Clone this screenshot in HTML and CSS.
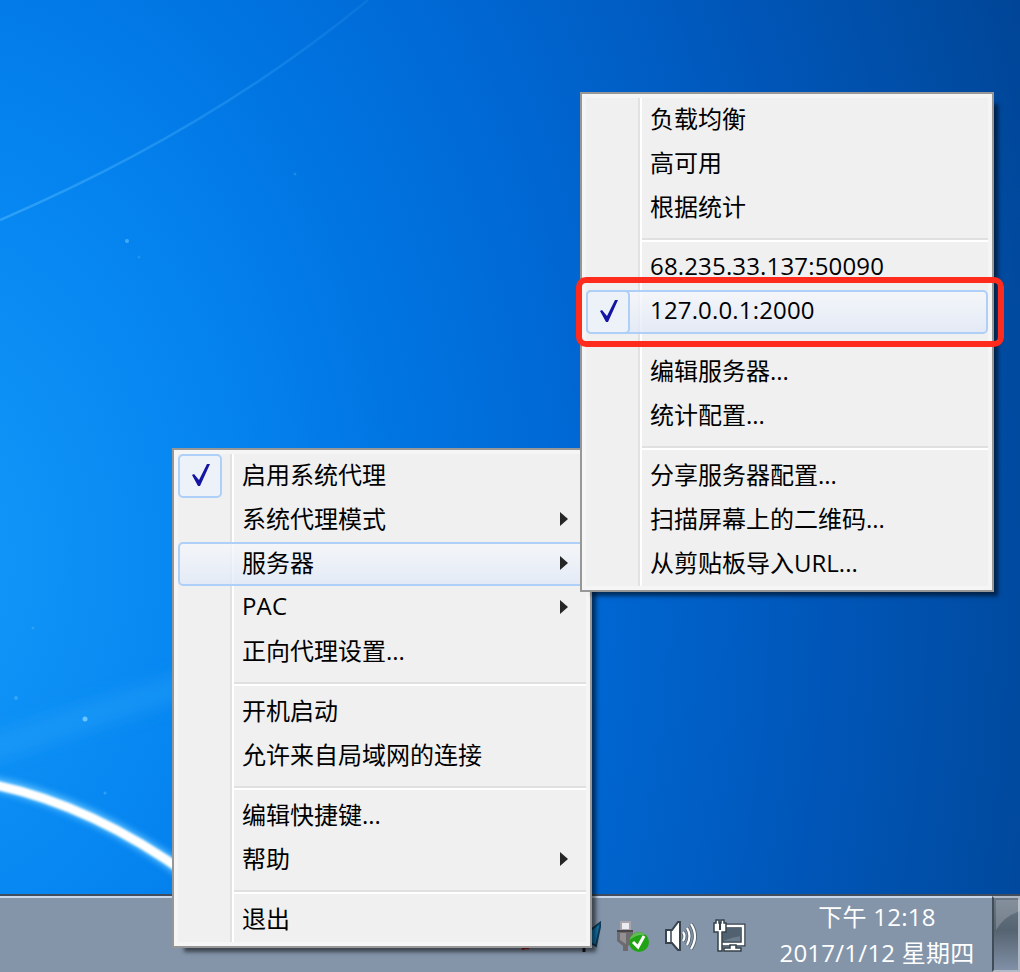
FILE: index.html
```html
<!DOCTYPE html>
<html lang="zh-CN">
<head>
<meta charset="utf-8">
<title>桌面</title>
<link rel="stylesheet" href="styles.css">
</head>
<body>
<main class="desktop">
  <svg class="wallpaper" width="1020" height="896" viewBox="0 0 1020 896" aria-hidden="true">
    <defs>
      <linearGradient id="ray" x1="0" y1="0" x2="1" y2="0"><stop offset="0" stop-color="#5bc0ff" stop-opacity=".45"/><stop offset="1" stop-color="#5bc0ff" stop-opacity=".1"/></linearGradient>
      <filter id="soft" x="-20%" y="-40%" width="140%" height="180%"><feGaussianBlur stdDeviation="3"/></filter>
      <filter id="wide" x="-20%" y="-60%" width="140%" height="220%"><feGaussianBlur stdDeviation="9"/></filter>
      <filter id="edge"><feGaussianBlur stdDeviation="1"/></filter>
    </defs>
    <path d="M0 220Q210 130 368 0" fill="none" stroke="url(#ray)" stroke-width="2.5"/>
    <path d="M-30 757Q80 718 220 674" fill="none" stroke="#35a9fb" stroke-opacity=".38" stroke-width="22" filter="url(#wide)"/>
    <path d="M-20 781Q85 799 190 876" fill="none" stroke="#58bdff" stroke-width="14" filter="url(#soft)"/>
    <path d="M-20 782Q85 800 190 876" fill="none" stroke="#fff" stroke-width="9" filter="url(#edge)"/>
    <g fill="#6bc4ff"><circle cx="85" cy="719" r="2.5"/><circle cx="127" cy="241" r="2" opacity=".6"/><circle cx="16" cy="698" r="2" opacity=".4"/><circle cx="105" cy="793" r="1.5" opacity=".4"/><circle cx="33" cy="628" r="1.5" opacity=".3"/><circle cx="295" cy="174" r="1.5" opacity=".25"/><circle cx="139" cy="257" r="1.5" opacity=".25"/></g>
  </svg>

  <footer class="taskbar">
    <div class="tray">
      <svg class="hidden-apps" width="80" height="36" viewBox="0 0 80 36"><path d="M80 4L62 18L70 25L75 28Z" fill="#137bb8" stroke="#123b55" stroke-width="2"/><path d="M2 32V30H8" fill="none" stroke="#a51e25" stroke-width="2.500"/><path d="M63 28V34" stroke="#17191d" stroke-width="3"/></svg>
      <svg width="32" height="36" viewBox="0 0 32 36"><path d="M4 4H13V12H4Z" fill="#ececf2" stroke="#aaa5aa" stroke-width="2"/><path d="M0 12H16V24L11 28V33H6V28L0 23Z" fill="#6d6b6e"/><path d="M0 13H16" stroke="#484649" stroke-width="2"/><path d="M3 15H9V26L3 22Z" fill="#929092"/><circle cx="22" cy="24" r="10" fill="#21a413"/><path d="M12.500 22A10 10 0 0 1 29 17Q20 16 12.500 22Z" fill="#63bb57"/><path d="M16 24L21 29L27 18" fill="none" stroke="#fff" stroke-width="3"/></svg>
      <svg width="32" height="36" viewBox="0 0 32 36"><path d="M1 12H7L13 4H15V32H13L7 25H1Z" fill="#fff" stroke="#38434d" stroke-width="2"/><path d="M6 13V24" stroke="#65717d" stroke-width="2"/><g fill="none" stroke="#56636f" stroke-width="4"><path d="M18 14Q21 18 18 23"/><path d="M22 10Q27 18 22 27"/><path d="M26 6Q34 18 26 31"/></g><g fill="none" stroke="#fff" stroke-width="2.200"><path d="M18 14Q21 18 18 23"/><path d="M22 10Q27 18 22 27"/><path d="M26 6Q34 18 26 31"/></g></svg>
      <svg width="34" height="36" viewBox="0 0 34 36"><path d="M8 8H30V26H8Z" fill="#6c7c8c" stroke="#35414b" stroke-width="5"/><path d="M10 10H28V18Q20 19 10 23Z" fill="#52616f"/><path d="M8 8H30V26H8Z" fill="none" stroke="#fff" stroke-width="2.500"/><path d="M11 33V30H17V27H23V30H28V33Z" fill="#fff" stroke="#35414b" stroke-width="1.500"/><path d="M1 5H3V2H6V5H8V2H11V5H13V14H9V33H5V14H1Z" fill="#fff" stroke="#35414b" stroke-width="1.500"/><path d="M7 5V12" stroke="#35414b" stroke-width="2"/></svg>
    </div>
    <time class="clock"><span>下午 12:18</span><span>2017/1/12 星期四</span></time>
    <div class="show-desktop"><svg width="24" height="74" viewBox="0 0 24 74" preserveAspectRatio="none"><path d="M0 0H24V11Q8 16 0 30Z" fill="#fff" opacity=".18"/></svg></div>
  </footer>

  <nav class="menu menu-main">
    <div class="item"><span class="check"><svg width="18" height="22" viewBox="0 0 18 22"><path d="M0 11L2 10L7 16L15 0H18L8 22H6Z" fill="#1515a3"/></svg></span><span class="label">启用系统代理</span></div>
    <div class="item"><span class="label">系统代理模式</span><i class="arrow"></i></div>
    <div class="item active"><span class="label">服务器</span><i class="arrow"></i></div>
    <div class="item"><span class="label latin">PAC</span><i class="arrow"></i></div>
    <div class="item"><span class="label">正向代理设置...</span></div>
    <div class="separator"></div>
    <div class="item"><span class="label">开机启动</span></div>
    <div class="item"><span class="label">允许来自局域网的连接</span></div>
    <div class="separator"></div>
    <div class="item"><span class="label">编辑快捷键...</span></div>
    <div class="item"><span class="label">帮助</span><i class="arrow"></i></div>
    <div class="separator"></div>
    <div class="item"><span class="label">退出</span></div>
  </nav>

  <nav class="menu menu-servers">
    <div class="item"><span class="label">负载均衡</span></div>
    <div class="item"><span class="label">高可用</span></div>
    <div class="item"><span class="label">根据统计</span></div>
    <div class="separator"></div>
    <div class="item"><span class="label latin">68.235.33.137:50090</span></div>
    <div class="item active"><span class="check"><svg width="18" height="22" viewBox="0 0 18 22"><path d="M0 11L2 10L7 16L15 0H18L8 22H6Z" fill="#1515a3"/></svg></span><span class="label latin">127.0.0.1:2000</span></div>
    <div class="separator"></div>
    <div class="item"><span class="label">编辑服务器...</span></div>
    <div class="item"><span class="label">统计配置...</span></div>
    <div class="separator"></div>
    <div class="item"><span class="label">分享服务器配置...</span></div>
    <div class="item"><span class="label">扫描屏幕上的二维码...</span></div>
    <div class="item"><span class="label">从剪贴板导入URL...</span></div>
  </nav>
  <div class="callout"></div>
</main>
</body>
</html>
```

FILE: styles.css
```css
* { box-sizing: border-box; }
body { margin: 0; font-family: "Open Sans", "Noto Sans CJK SC", sans-serif; font-size: 24px; color: #000; }
.desktop {
  position: relative;
  display: flex;
  flex-direction: column;
  justify-content: flex-end;
  width: 1020px;
  height: 972px;
  overflow: hidden;
  background: radial-gradient(ellipse 1180px 1650px at -80px 560px, #1698fa 0, #0e92f6 10%, #0584f0 26%, #0074e1 42%, #0066d1 58%, #0056b8 77%, #004a9f 94%, #004496 100%);
}
.wallpaper { position: absolute; top: 0; left: 0; }

.taskbar {
  position: relative;
  display: flex;
  justify-content: flex-end;
  height: 78px;
  border-top: 2px solid #414d5d;
  background: #8495aa;
  box-shadow: inset 0 2px #c9d8eb;
}
.tray { display: flex; gap: 16px; padding-top: 22px; }
.tray svg { display: block; }
.clock {
  display: flex;
  flex-direction: column;
  width: 230px;
  margin-left: 15px;
  padding-top: 3px;
  line-height: 36px;
  text-align: center;
  letter-spacing: .25px;
  color: #fff;
  white-space: nowrap;
}
.show-desktop {
  width: 28px;
  height: 76px;
  padding: 2px 0 0 2px;
  border: 2px solid #aeb9c5;
  border-left-color: #414c59;
  background: linear-gradient(#6b7987, #566371 45%, #8190a7);
}

.menu {
  position: absolute;
  padding: 4px;
  border: 2px solid #979797;
  height: 500px;
  background: linear-gradient(90deg, #e2e2e2 50%, #fff 50%) 56px 4px / 4px 488px no-repeat, #f0f0f0;
  box-shadow: inset 0 0 0 4px #f5f5f5, 8px 8px 4px -4px rgba(0, 0, 0, .55);
}
.menu-main { left: 172px; top: 448px; width: 420px; }
.menu-servers { left: 580px; top: 92px; width: 414px; }
.item { display: flex; align-items: center; position: relative; height: 44px; padding-left: 64px; }
.item.active {
  border: 2px solid #aecff7;
  border-radius: 5px;
  padding-left: 62px;
  background: linear-gradient(rgba(245, 247, 251, .75), rgba(224, 233, 248, .75));
}
.label { line-height: 44px; margin-top: -2px; white-space: nowrap; }
.label.latin { margin-top: -4px; letter-spacing: .16px; }
.check {
  position: absolute;
  left: 0;
  top: 0;
  display: grid;
  place-items: center;
  width: 44px;
  height: 44px;
  border: 2px solid #aecff7;
  border-radius: 5px;
  background: #edf2f9;
}
.active .check { left: -2px; top: -2px; }
.check svg { display: block; margin: -2px 0 0 2px; }
.arrow { margin: -2px 18px 0 auto; border-left: 8px solid #262626; border-top: 7px solid transparent; border-bottom: 7px solid transparent; }
.active .arrow { margin-right: 16px; }
.separator { height: 16px; margin-left: 56px; background: linear-gradient(#e0e0e0 50%, #fff 50%) 0 8px / 100% 4px no-repeat; }
.callout { position: absolute; left: 576px; top: 277px; width: 428px; height: 70px; border: 6px solid #ff2b1d; border-radius: 10px; }
```
